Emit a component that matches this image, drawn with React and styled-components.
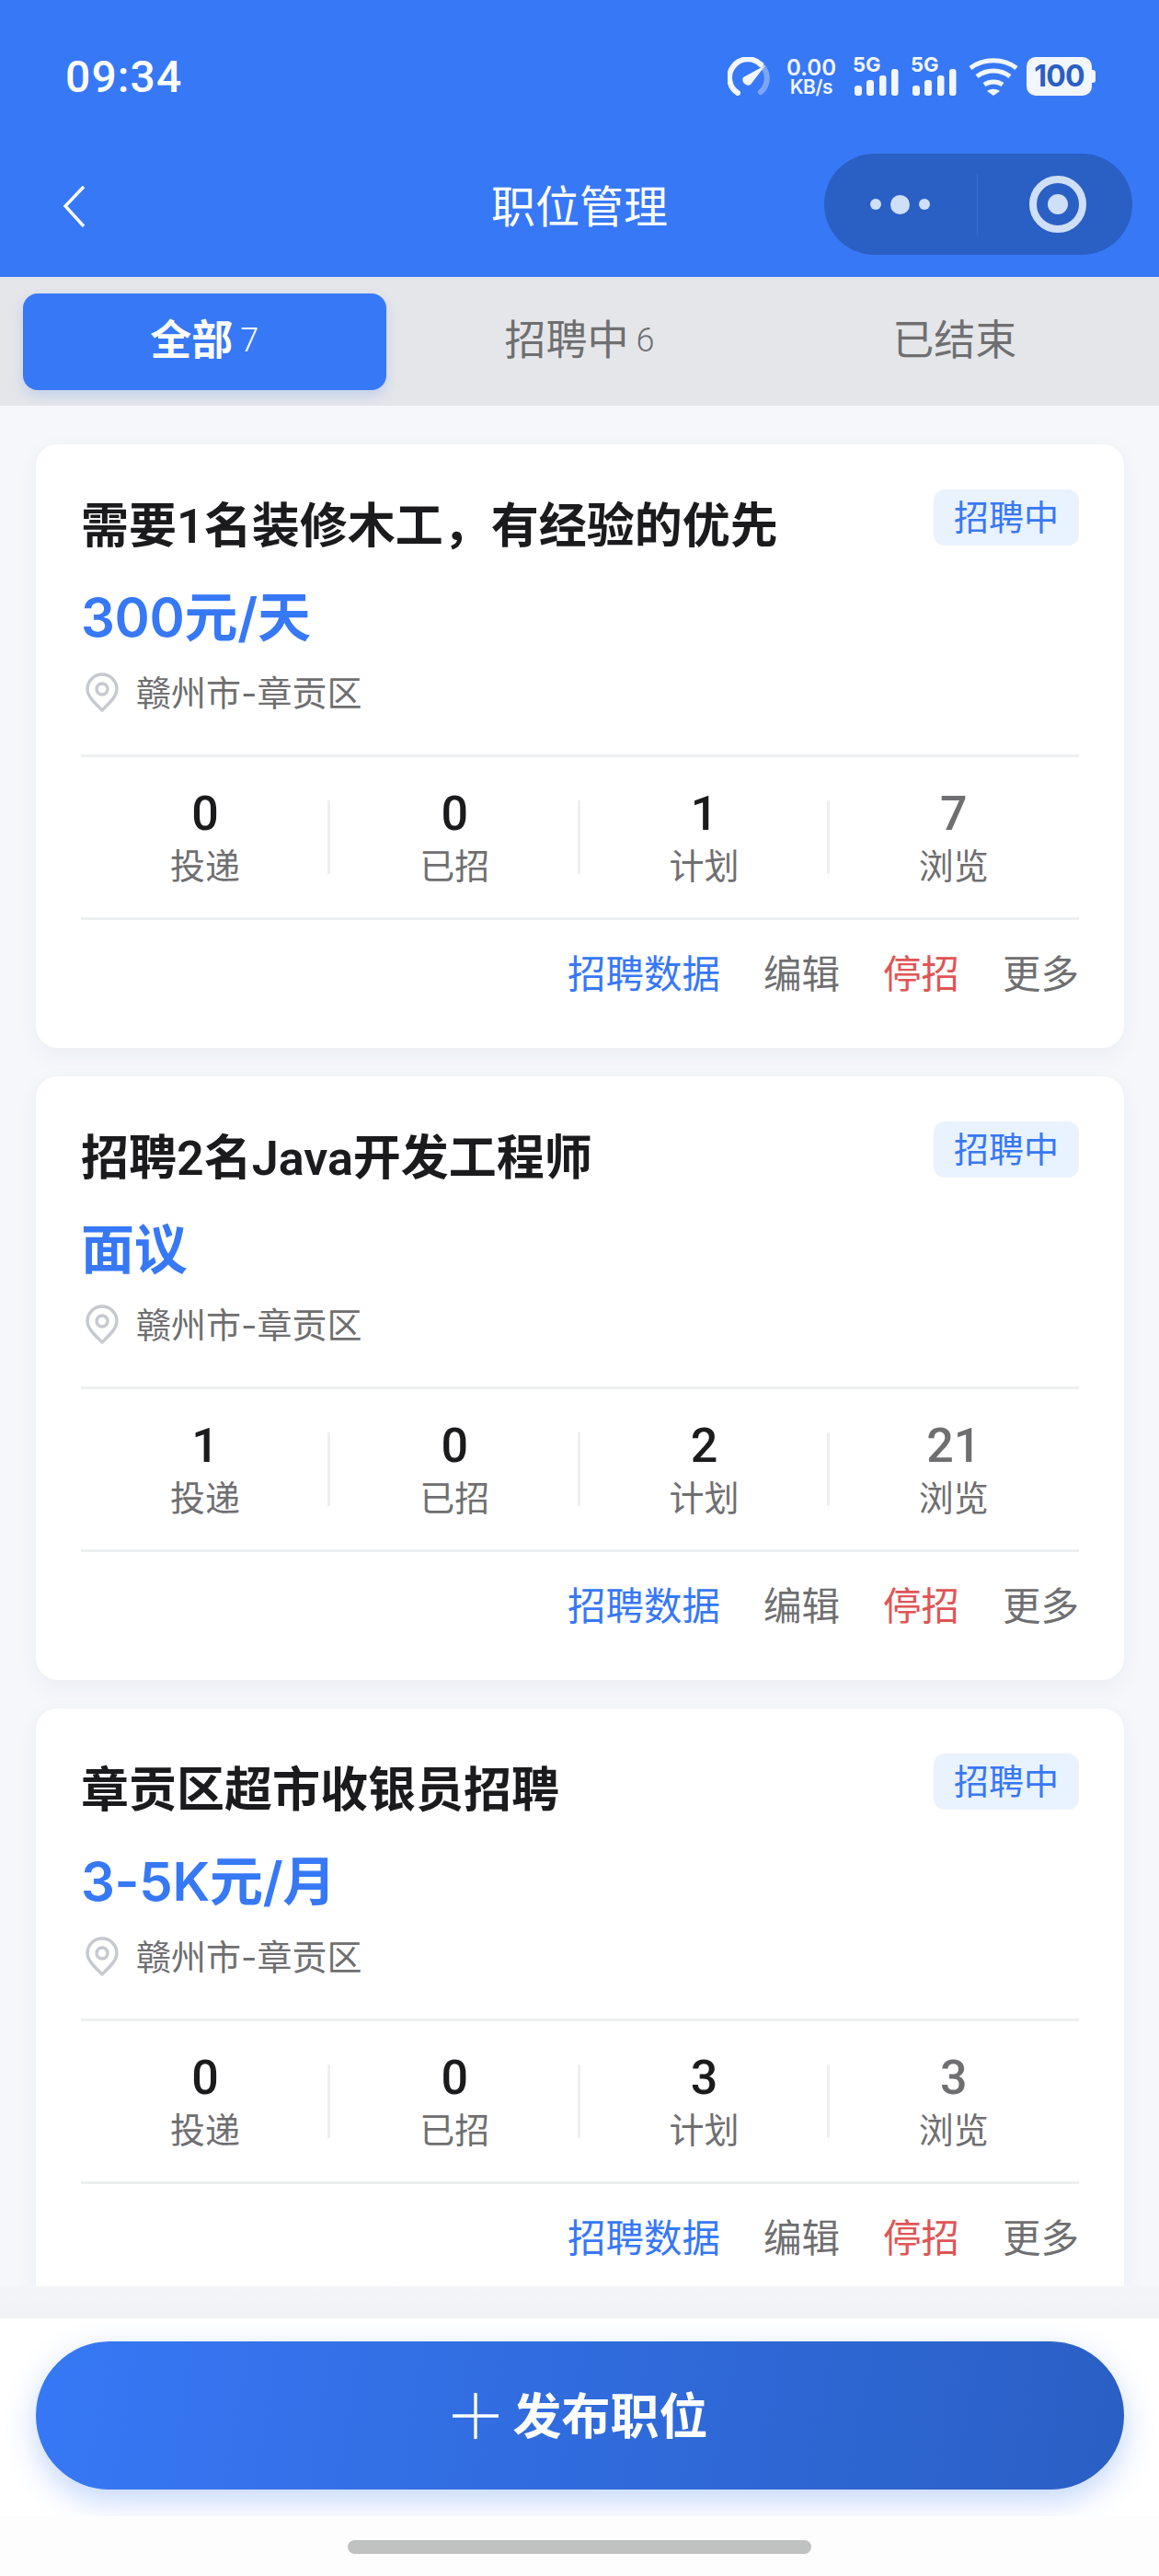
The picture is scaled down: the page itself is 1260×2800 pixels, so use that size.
import React from 'react';
import styled, { createGlobalStyle } from 'styled-components';

const Global = createGlobalStyle`
  html, body { margin: 0; padding: 0; background: #fdfdfd; }
  * { box-sizing: border-box; }
  body { font-family: Inter, "Noto Sans CJK SC", sans-serif; }
`;
const Page = styled.div`
  width: 1260px; height: 2800px; display: flex; flex-direction: column; overflow: hidden; background: #fdfdfd;
`;
const Header = styled.header`
  height: 301px; background: #3778f6; color: #fff; display: flex; flex-direction: column;
`;
const StatusBar = styled.div`
  height: 167px; padding: 61px 0 0 71px; position: relative;
`;
const Clock = styled.div`
  font: 500 48px/46px Roboto, sans-serif; letter-spacing: 1.1px;
`;
const StatusIcons = styled.div`
  position: absolute; left: 791px; top: 62px; display: flex; align-items: flex-start;
`;
const Gauge = styled.svg`
  width: 46px; height: 42px; margin-right: 18px; display: block;
`;
const Speed = styled.div`
  width: 54px; margin-right: 20px; text-align: center; font-family: Inter, sans-serif; font-weight: 600; color: #f2f6ff;
  span { display: block; }
  span:first-child { font-size: 24px; line-height: 23px; letter-spacing: .1px; }
  span:last-child { font-size: 21px; line-height: 20px; margin-top: 0; letter-spacing: -.4px; }
`;
const Signal = styled.div`
  position: relative; width: 48px; height: 42px; margin-right: 15px;
`;
const FiveG = styled.span`
  position: absolute; left: -2px; top: -3px; font: 700 22px/22px Inter, sans-serif; color: #f2f6ff;
`;
const SignalBars = styled.svg`
  position: absolute; left: 0; top: 0; width: 48px; height: 42px;
`;
const Wifi = styled.svg`
  width: 54px; height: 42px; margin-left: -2px; margin-right: 9px; display: block;
`;
const Battery = styled.div`
  width: 71px; height: 42px; border-radius: 10px; background: #f2f6ff; color: #2a5fc4; position: relative;
  font: 700 32px/42px Inter, sans-serif; text-align: center; letter-spacing: -.8px;
  &::after { content: ''; position: absolute; right: -4px; top: 14px; width: 4px; height: 14px; border-radius: 0 3px 3px 0; background: #f2f6ff; }
`;
const NavBar = styled.div`
  height: 134px; position: relative; display: flex; align-items: flex-start; justify-content: center;
`;
const Back = styled.svg`
  position: absolute; left: 67px; top: 34px; width: 28px; height: 46px;
`;
const NavTitle = styled.h1`
  margin: 26px 0 0; font: 400 48px/56px "Noto Sans CJK SC", sans-serif; color: #fff; letter-spacing: 0;
`;
const Capsule = styled.div`
  position: absolute; left: 896px; top: 0; width: 335px; height: 110px; border-radius: 55px; background: #2a5fc4;
  display: flex; align-items: center;
`;
const Dots = styled.div`
  width: 167px; height: 67px; display: flex; align-items: center; justify-content: flex-end; gap: 10px; padding-right: 51px;
  border-right: 1px solid #3a6dcd;
`;
const Dot = styled.i`
  display: block; width: ${p => p.$big ? 21 : 12}px; height: ${p => p.$big ? 21 : 12}px; border-radius: 50%; background: #cfdff7;
`;
const Record = styled.svg`
  width: 62px; height: 62px; margin-left: 56px; display: block;
`;
const Tabs = styled.nav`
  height: 140px; background: #e5e6ea; padding: 18px 25px 17px; display: grid; grid-template-columns: repeat(3, 1fr); gap: 13px;
`;
const Tab = styled.div`
  border-radius: 16px; display: flex; align-items: center; justify-content: center; gap: 8px; padding-bottom: 3px;
  background: ${p => p.$active ? '#3778f6' : 'transparent'};
  color: ${p => p.$active ? '#fff' : '#6f6f71'};
  box-shadow: ${p => p.$active ? '0 6px 14px rgba(55,120,246,.2)' : 'none'};
  font-size: 45px; line-height: 60px; font-weight: ${p => p.$active ? 700 : 400};
  small { font-size: 36px; font-weight: 300; font-family: Roboto, sans-serif; }
`;
const Main = styled.main`
  flex: 1; min-height: 0; overflow: hidden; background: #f5f7fb; padding: 42px 38px 0 39px; display: flex; flex-direction: column; gap: 31px;
`;
const Card = styled.article`
  flex: none; height: 656px; background: #fff; border-radius: 24px; padding: 49px 49px 0; box-shadow: 0 8px 24px rgba(30,50,90,.05);
`;
const Head = styled.div`
  display: flex; justify-content: space-between; align-items: flex-start;
`;
const Title = styled.h2`
  margin: 2px 0 -2px; font: 600 52px/78px Roboto, "Noto Sans CJK SC", sans-serif; color: #1b1b1d;
`;
const Tag = styled.span`
  width: 158px; height: 61px; border-radius: 12px; background: #e9f2ff; color: #3778f6; text-align: center;
  font: 400 38px/55px "Noto Sans CJK SC", sans-serif;
`;
const Price = styled.div`
  margin-top: 23px; font: 600 58px/76px Inter, "Noto Sans CJK SC", sans-serif; letter-spacing: -.3px; color: #3778f6;
`;
const Location = styled.div`
  margin-top: 16px; height: 56px; display: flex; align-items: center; gap: 19px; padding-left: 5px;
  font-size: 38px; line-height: 56px; color: #6f6f71;
  svg { width: 36px; height: 44px; flex: none; }
`;
const Stats = styled.div`
  margin-top: 39px; height: 180px; border-top: 3px solid #eeeff0; border-bottom: 3px solid #eeeff0;
  display: grid; grid-template-columns: repeat(4, 1fr); align-items: center;
`;
const Stat = styled.div`
  height: 80px; position: relative; padding-right: 1px; display: flex; flex-direction: column; align-items: center;
  &:not(:last-child)::after { content: ''; position: absolute; right: 0; top: 0; bottom: 0; width: 3px; background: #eeeff0; }
`;
const Num = styled.strong`
  margin-top: -10px; font: 500 52px/50px Roboto, sans-serif; color: ${p => p.$muted ? '#6f6f71' : '#1b1b1d'};
`;
const Label = styled.span`
  margin-top: 8px; font-size: 38px; line-height: 46px; color: #6f6f71;
`;
const Actions = styled.div`
  height: 118px; display: flex; justify-content: flex-end; align-items: center; gap: 47px;
`;
const Action = styled.span`
  font-size: 41.5px; line-height: 56px; color: ${p => p.$c || '#6f6f71'};
`;
const Band = styled.div`
  flex: none; height: 35px; background: linear-gradient(#f4f5f8, #f1f2f5);
`;
const ButtonArea = styled.div`
  flex: none; height: 215px; overflow: hidden; padding: 25px 38px 0 39px; background: #fff;
`;
const Publish = styled.button`
  width: 100%; height: 161px; border: 0; border-radius: 80px; color: #fff; display: flex; align-items: center; justify-content: center; gap: 16px; padding: 0 0 6px;
  background: linear-gradient(100deg, #3778f6 0%, #2a5fc4 100%);
  box-shadow: 0 12px 34px rgba(55,120,246,.3);
  font: 700 53px/60px "Noto Sans CJK SC", sans-serif;
  svg { width: 50px; height: 50px; margin-top: 6px; }
`;
const HomeArea = styled.div`
  flex: none; height: 65px; display: flex; justify-content: center; padding-top: 26px;
`;
const HomeBar = styled.div`
  width: 504px; height: 15px; border-radius: 8px; background: #c0c2c1;
`;

const SignalIcon = () => (
  <Signal>
    <SignalBars viewBox="0 0 48 42" fill="#f2f6ff">
      <rect x="0" y="31" width="8" height="11" rx="3" />
      <rect x="13" y="25" width="8" height="17" rx="3" />
      <rect x="27" y="20" width="7.5" height="22" rx="3" />
      <rect x="40" y="13" width="7.5" height="29" rx="3" />
    </SignalBars>
    <FiveG>5G</FiveG>
  </Signal>
);

const jobs = [
  { title: '需要1名装修木工，有经验的优先', price: '300元/天', stats: [0, 0, 1, 7] },
  { title: '招聘2名Java开发工程师', price: '面议', stats: [1, 0, 2, 21] },
  { title: '章贡区超市收银员招聘', price: '3-5K元/月', stats: [0, 0, 3, 3] },
];
const statLabels = ['投递', '已招', '计划', '浏览'];

export default function App() {
  return (
    <Page>
      <Global />
      <Header>
        <StatusBar>
          <Clock>09:34</Clock>
          <StatusIcons>
            <Gauge viewBox="0 0 46 42" fill="none">
              <path d="M36 8 A 20 20 0 0 1 36 38" stroke="#7ea6f8" strokeWidth="6" strokeLinecap="round" />
              <path d="M11 39 A 20 20 0 1 1 36 8" stroke="#f2f6ff" strokeWidth="6" strokeLinecap="round" />
              <path d="M17 22 L41 9 L25 30 A 6 6 0 0 1 17 22Z" fill="#f2f6ff" />
            </Gauge>
            <Speed><span>0.00</span><span>KB/s</span></Speed>
            <SignalIcon />
            <SignalIcon />
            <Wifi viewBox="0 0 54 42" fill="none" stroke="#f2f6ff">
              <path d="M2 12 C16 1 38 1 52 12" strokeWidth="5" />
              <path d="M9 21 C20 13 34 13 45 21" strokeWidth="5" />
              <path d="M17 30 C23 26 31 26 37 30" strokeWidth="5" />
              <path d="M20 37 C24 34 30 34 34 37 L27 42Z" fill="#f2f6ff" stroke="none" />
            </Wifi>
            <Battery>100</Battery>
          </StatusIcons>
        </StatusBar>
        <NavBar>
          <Back viewBox="0 0 28 46" fill="none">
            <path d="M24 2 L4 23 L24 45" stroke="#fff" strokeWidth="3.4" />
          </Back>
          <NavTitle>职位管理</NavTitle>
          <Capsule>
            <Dots><Dot /><Dot $big /><Dot /></Dots>
            <Record viewBox="0 0 62 62" fill="none">
              <circle cx="31" cy="31" r="27" stroke="#cfdff7" strokeWidth="8" />
              <circle cx="31" cy="31" r="11" fill="#cfdff7" />
            </Record>
          </Capsule>
        </NavBar>
      </Header>
      <Tabs>
        <Tab $active>全部<small>7</small></Tab>
        <Tab>招聘中<small>6</small></Tab>
        <Tab>已结束</Tab>
      </Tabs>
      <Main>
        {jobs.map(job => (
          <Card key={job.title}>
            <Head>
              <Title>{job.title}</Title>
              <Tag>招聘中</Tag>
            </Head>
            <Price>{job.price}</Price>
            <Location>
              <svg viewBox="0 0 36 44" fill="none" stroke="#c6c9d0" strokeWidth="3.4">
                <path d="M18 41 C10 33 2 26 2 18 A16 16 0 0 1 34 18 C34 26 26 33 18 41Z" strokeLinejoin="round" />
                <circle cx="18" cy="18" r="6" />
              </svg>
              赣州市-章贡区
            </Location>
            <Stats>
              {job.stats.map((n, i) => (
                <Stat key={statLabels[i]}>
                  <Num $muted={i === 3}>{n}</Num>
                  <Label>{statLabels[i]}</Label>
                </Stat>
              ))}
            </Stats>
            <Actions>
              <Action $c="#3778f6">招聘数据</Action>
              <Action>编辑</Action>
              <Action $c="#df5555">停招</Action>
              <Action>更多</Action>
            </Actions>
          </Card>
        ))}
      </Main>
      <Band />
      <ButtonArea>
        <Publish>
          <svg viewBox="0 0 50 50" fill="none" stroke="#fff" strokeWidth="3.4"><path d="M0 25H50M25 0V50" /></svg>
          发布职位
        </Publish>
      </ButtonArea>
      <HomeArea><HomeBar /></HomeArea>
    </Page>
  );
}
